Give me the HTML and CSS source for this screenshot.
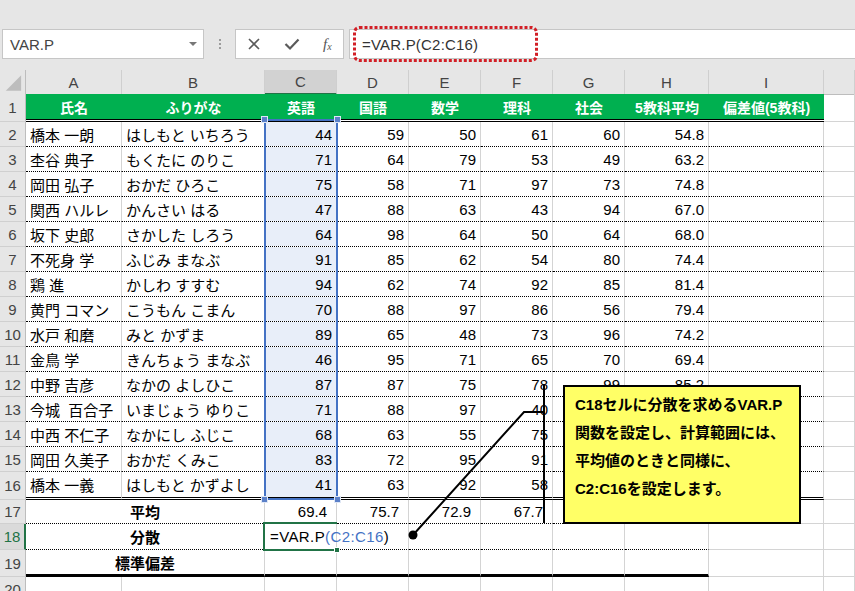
FILE: index.html
```html
<!DOCTYPE html>
<html lang="ja">
<head>
<meta charset="utf-8">
<title>VAR.P</title>
<link rel="stylesheet" href="styles.css">
</head>
<body>
<div class="toolbar">
  <div class="namebox"><span>VAR.P</span><span class="caret"></span></div>
  <div class="vdots"><i></i><i></i><i></i></div>
  <div class="btns">
    <svg width="14" height="14" viewBox="0 0 14 14"><path d="M2 2L12 12M12 2L2 12" stroke="#5a5a5a" stroke-width="1.6" fill="none"/></svg>
    <svg width="16" height="14" viewBox="0 0 16 14"><path d="M1.5 7L6 11.5L14.5 2.5" stroke="#5a5a5a" stroke-width="2.2" fill="none"/></svg>
    <span class="fx">f<sub>x</sub></span>
  </div>
  <div class="formula">=VAR.P(C2:C16)</div>
</div>

<div class="sheet">
  <div class="row hdr">
    <div class="c corner"><svg width="26" height="24" viewBox="0 0 26 24"><polygon points="22,5 22,21 6,21" fill="#bdbdbd"/></svg></div>
    <div class="c ch">A</div><div class="c ch">B</div><div class="c ch on">C</div><div class="c ch">D</div><div class="c ch">E</div><div class="c ch">F</div><div class="c ch">G</div><div class="c ch">H</div><div class="c ch">I</div><div class="c ch"></div>
  </div>
  <div class="row r1">
    <div class="c rh">1</div>
    <div class="c g">氏名</div><div class="c g">ふりがな</div><div class="c g">英語</div><div class="c g">国語</div><div class="c g">数学</div><div class="c g">理科</div><div class="c g">社会</div><div class="c g">5教科平均</div><div class="c g">偏差値(5教科)</div><div class="c"></div>
  </div>
  <div class="row rr"><div class="c rh">2</div><div class="c t x">橋本 一朗</div><div class="c t x">はしもと いちろう</div><div class="c n x s">44</div><div class="c n x">59</div><div class="c n x">50</div><div class="c n x">61</div><div class="c n x">60</div><div class="c n x">54.8</div><div class="c x"></div><div class="c"></div></div>
  <div class="row rr"><div class="c rh">3</div><div class="c t x">杢谷 典子</div><div class="c t x">もくたに のりこ</div><div class="c n x s">71</div><div class="c n x">64</div><div class="c n x">79</div><div class="c n x">53</div><div class="c n x">49</div><div class="c n x">63.2</div><div class="c x"></div><div class="c"></div></div>
  <div class="row rr"><div class="c rh">4</div><div class="c t x">岡田 弘子</div><div class="c t x">おかだ ひろこ</div><div class="c n x s">75</div><div class="c n x">58</div><div class="c n x">71</div><div class="c n x">97</div><div class="c n x">73</div><div class="c n x">74.8</div><div class="c x"></div><div class="c"></div></div>
  <div class="row rr"><div class="c rh">5</div><div class="c t x">関西 ハルレ</div><div class="c t x">かんさい はる</div><div class="c n x s">47</div><div class="c n x">88</div><div class="c n x">63</div><div class="c n x">43</div><div class="c n x">94</div><div class="c n x">67.0</div><div class="c x"></div><div class="c"></div></div>
  <div class="row rr"><div class="c rh">6</div><div class="c t x">坂下 史郎</div><div class="c t x">さかした しろう</div><div class="c n x s">64</div><div class="c n x">98</div><div class="c n x">64</div><div class="c n x">50</div><div class="c n x">64</div><div class="c n x">68.0</div><div class="c x"></div><div class="c"></div></div>
  <div class="row rr"><div class="c rh">7</div><div class="c t x">不死身 学</div><div class="c t x">ふじみ まなぶ</div><div class="c n x s">91</div><div class="c n x">85</div><div class="c n x">62</div><div class="c n x">54</div><div class="c n x">80</div><div class="c n x">74.4</div><div class="c x"></div><div class="c"></div></div>
  <div class="row rr"><div class="c rh">8</div><div class="c t x">鶏 進</div><div class="c t x">かしわ すすむ</div><div class="c n x s">94</div><div class="c n x">62</div><div class="c n x">74</div><div class="c n x">92</div><div class="c n x">85</div><div class="c n x">81.4</div><div class="c x"></div><div class="c"></div></div>
  <div class="row rr"><div class="c rh">9</div><div class="c t x">黄門 コマン</div><div class="c t x">こうもん こまん</div><div class="c n x s">70</div><div class="c n x">88</div><div class="c n x">97</div><div class="c n x">86</div><div class="c n x">56</div><div class="c n x">79.4</div><div class="c x"></div><div class="c"></div></div>
  <div class="row rr"><div class="c rh">10</div><div class="c t x">水戸 和磨</div><div class="c t x">みと かずま</div><div class="c n x s">89</div><div class="c n x">65</div><div class="c n x">48</div><div class="c n x">73</div><div class="c n x">96</div><div class="c n x">74.2</div><div class="c x"></div><div class="c"></div></div>
  <div class="row rr"><div class="c rh">11</div><div class="c t x">金鳥 学</div><div class="c t x">きんちょう まなぶ</div><div class="c n x s">46</div><div class="c n x">95</div><div class="c n x">71</div><div class="c n x">65</div><div class="c n x">70</div><div class="c n x">69.4</div><div class="c x"></div><div class="c"></div></div>
  <div class="row rr"><div class="c rh">12</div><div class="c t x">中野 吉彦</div><div class="c t x">なかの よしひこ</div><div class="c n x s">87</div><div class="c n x">87</div><div class="c n x">75</div><div class="c n x">78</div><div class="c n x">99</div><div class="c n x">85.2</div><div class="c x"></div><div class="c"></div></div>
  <div class="row rr"><div class="c rh">13</div><div class="c t x">今城  百合子</div><div class="c t x">いまじょう ゆりこ</div><div class="c n x s">71</div><div class="c n x">88</div><div class="c n x">97</div><div class="c n x">40</div><div class="c n x"></div><div class="c n x"></div><div class="c x"></div><div class="c"></div></div>
  <div class="row rr"><div class="c rh">14</div><div class="c t x">中西 不仁子</div><div class="c t x">なかにし ふじこ</div><div class="c n x s">68</div><div class="c n x">63</div><div class="c n x">55</div><div class="c n x">75</div><div class="c n x"></div><div class="c n x"></div><div class="c x"></div><div class="c"></div></div>
  <div class="row rr"><div class="c rh">15</div><div class="c t x">岡田 久美子</div><div class="c t x">おかだ くみこ</div><div class="c n x s">83</div><div class="c n x">72</div><div class="c n x">95</div><div class="c n x">91</div><div class="c n x"></div><div class="c n x"></div><div class="c x"></div><div class="c"></div></div>
  <div class="row r16"><div class="c rh">16</div><div class="c t w">橋本 一義</div><div class="c t w">はしもと かずよし</div><div class="c n w s">41</div><div class="c n w">63</div><div class="c n w">92</div><div class="c n w">58</div><div class="c n w"></div><div class="c n w"></div><div class="c w"></div><div class="c"></div></div>
  <div class="row r17"><div class="c rh">17</div><div class="c m x">平均</div><div class="c n y x">69.4</div><div class="c n y x">75.7</div><div class="c n y x">72.9</div><div class="c n y x">67.7</div><div class="c x"></div><div class="c x"></div><div class="c"></div><div class="c"></div></div>
  <div class="row r18"><div class="c rh act">18</div><div class="c m x">分散</div><div class="c t x edit">=VAR.P<span class="ref">(C2:C16</span>)<span class="cursor"></span></div><div class="c x"></div><div class="c x"></div><div class="c x"></div><div class="c x"></div><div class="c x"></div><div class="c"></div><div class="c"></div></div>
  <div class="row r19"><div class="c rh">19</div><div class="c m k">標準偏差</div><div class="c k"></div><div class="c k"></div><div class="c k"></div><div class="c k"></div><div class="c k"></div><div class="c k"></div><div class="c"></div><div class="c"></div></div>
  <div class="row r20"><div class="c rh">20</div><div class="c"></div><div class="c"></div><div class="c"></div><div class="c"></div><div class="c"></div><div class="c"></div><div class="c"></div><div class="c"></div><div class="c"></div><div class="c"></div></div>
</div>

<div class="range"><i class="h tl"></i><i class="h tr"></i><i class="h bl"></i><i class="h br"></i></div>
<div class="active"><i class="fill"></i></div>

<svg class="ink" width="855" height="591" viewBox="0 0 855 591">
  <rect x="354.5" y="27.5" width="182" height="33" rx="5" fill="none" stroke="#d21f26" stroke-width="3" stroke-dasharray="3 2"/>
  <polyline points="413,535 524,412 544,412" fill="none" stroke="#000" stroke-width="2"/>
  <line x1="544" y1="384" x2="544" y2="523" stroke="#000" stroke-width="2"/>
  <circle cx="413" cy="535" r="4.5" fill="#000"/>
</svg>

<div class="callout">
  <p>C18セルに分散を求めるVAR.P</p>
  <p>関数を設定し、計算範囲には、</p>
  <p>平均値のときと同様に、</p>
  <p>C2:C16を設定します。</p>
</div>
</body>
</html>
```

FILE: styles.css
```css
* { box-sizing: border-box; }
html, body { margin: 0; padding: 0; }
body {
  width: 855px;
  height: 591px;
  overflow: hidden;
  position: relative;
  background: #fff;
  font-family: "Liberation Sans", "Noto Sans CJK JP", sans-serif;
}

/* ---------- toolbar ---------- */
.toolbar {
  height: 70px;
  background: #e6e6e6;
  display: flex;
  align-items: flex-start;
  padding-top: 29px;
}
.namebox {
  margin-left: 2px;
  width: 202px;
  height: 30px;
  background: #fff;
  border: 1px solid #c6c6c6;
  display: flex;
  align-items: center;
  justify-content: space-between;
  padding: 0 6px 0 7px;
  font-size: 15px;
  color: #444;
}
.caret {
  width: 0;
  height: 0;
  border-left: 4px solid transparent;
  border-right: 4px solid transparent;
  border-top: 4px solid #777;
}
.vdots {
  width: 31px;
  height: 30px;
  display: flex;
  flex-direction: column;
  align-items: center;
  gap: 2px;
  padding-top: 10px;
}
.vdots i { display: block; width: 2px; height: 2px; background: #9c9c9c; }
.btns {
  width: 109px;
  height: 30px;
  background: #fff;
  border: 1px solid #c6c6c6;
  display: flex;
  align-items: center;
  justify-content: space-around;
}
.fx {
  font-family: "Liberation Serif", serif;
  font-style: italic;
  font-size: 15px;
  color: #555;
  line-height: 1;
}
.fx sub { font-size: 10px; vertical-align: -1px; }
.formula {
  margin-left: 5px;
  flex: 1;
  height: 30px;
  background: #fff;
  border: 1px solid #c6c6c6;
  border-right: none;
  padding-left: 12px;
  display: flex;
  align-items: center;
  font-size: 15px;
  letter-spacing: 0.2px;
  color: #333;
}

/* ---------- sheet grid ---------- */
.row {
  display: grid;
  grid-template-columns: 26px 96px 143px 72px 72px 72px 72px 72px 84px 115px 31px;
}
.hdr { height: 24px; }
.r1 { height: 28px; }
.rr { height: 25px; }
.r16 { height: 28px; }
.r17 { height: 24px; }
.r18 { height: 26px; }
.r19 { height: 27px; }
.r20 { height: 26px; }

.c {
  border-right: 1px solid #d4d4d4;
  border-bottom: 1px solid #d4d4d4;
  display: flex;
  align-items: center;
  padding: 0 4px;
  font-size: 15px;
  color: #000;
  white-space: pre;
  min-width: 0;
}
.corner, .ch {
  background: #e6e6e6;
  border-right: 1px solid #cfcfcf;
  border-bottom: 1px solid #bdbdbd;
  color: #444;
  justify-content: center;
}
.corner { padding: 0; align-items: flex-start; border-right-color: #bdbdbd; }
.ch.on { background: #d2d2d2; border-bottom: 2px solid #217346; }

.rh {
  background: #e6e6e6;
  border-right: 1px solid #bdbdbd;
  border-bottom: 1px solid #d0d0d0;
  color: #444;
  justify-content: center;
  padding: 0;
}
.rh.act {
  background: #dadada;
  color: #217346;
  border-right: 2px solid #217346;
}

.g {
  background: #00b050;
  background-clip: padding-box;
  color: #fff;
  font-weight: bold;
  font-size: 14px;
  justify-content: center;
  border-right: none;
  border-bottom: 3px double #000;
}

.t { justify-content: flex-start; }
.n { justify-content: flex-end; }
.x { border-bottom: 1px dotted #000; }
.w { border-bottom: 3px double #000; background-clip: padding-box; }
.k { border-bottom: 3px solid #000; }
.s { background: #e8eef9; background-clip: padding-box; }
.y { padding-right: 9px; }
.m {
  grid-column: span 2;
  justify-content: center;
  font-weight: bold;
}
.edit { overflow: visible; padding-left: 5px; letter-spacing: 0.4px; }
.ref { color: #4472c4; }
.cursor {
  display: inline-block;
  width: 1px;
  height: 20px;
  background: #000;
  margin-left: 3px;
}

/* ---------- overlays ---------- */
.range {
  position: absolute;
  left: 264px;
  top: 119px;
  width: 74px;
  height: 381px;
  border: 2px solid #4472c4;
}
.range .h {
  position: absolute;
  width: 7px;
  height: 7px;
  background: #5b80c8;
  border: 1px solid #dfe7f5;
}
.range .tl { left: -5px; top: -5px; }
.range .tr { right: -5px; top: -5px; }
.range .bl { left: -5px; bottom: -5px; }
.range .br { right: -5px; bottom: -5px; }

.active {
  position: absolute;
  left: 263px;
  top: 522px;
  width: 74px;
  height: 29px;
  border: 2px solid #217346;
  border-right: none;
}
.active .fill {
  position: absolute;
  right: -3px;
  bottom: -4px;
  width: 6px;
  height: 6px;
  background: #217346;
  border: 1px solid #fff;
}

.ink {
  position: absolute;
  left: 0;
  top: 0;
}

.callout {
  position: absolute;
  left: 563px;
  top: 385px;
  width: 238px;
  height: 139px;
  background: #ffff66;
  border: 2px solid #000;
  padding: 4px 0 0 10px;
  font-size: 15px;
  font-weight: bold;
  line-height: 28px;
  color: #000;
}
.callout p { margin: 0; white-space: nowrap; }
```
